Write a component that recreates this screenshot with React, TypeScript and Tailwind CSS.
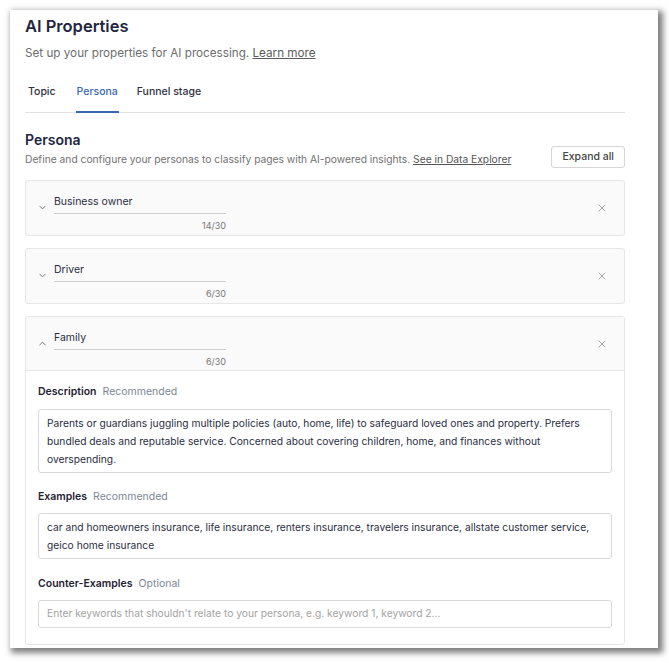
import { ChevronDown, ChevronUp, X } from "lucide-react";

const font = { fontFamily: "Inter, 'Noto Sans', sans-serif" };

function Header({ name, count, open }: { name: string; count: string; open?: boolean }) {
  return (
    <div className={`flex items-start h-[54px] pl-[11px] pr-[16px] ${open ? "border-b border-[#e6e6e6]" : ""}`}>
      {open ? (
        <ChevronUp className="w-[11px] h-[11px] text-[#555] mt-[21px]" strokeWidth={1.7} />
      ) : (
        <ChevronDown className="w-[11px] h-[11px] text-[#555] mt-[21px]" strokeWidth={1.7} />
      )}
      <div className="ml-[6px] mt-[13px] w-[172px] flex flex-col">
        <div className="text-[10.5px] text-[#2b2d42] pb-[4px] border-b border-[#cfcfcf] leading-[15px]">{name}</div>
        <div className="text-right text-[9px] text-[#777] mt-[6px] leading-[12px]">{count}</div>
      </div>
      <div className="flex-1" />
      <X className="w-[12px] h-[12px] text-[#777] mt-[21px]" strokeWidth={1.3} />
    </div>
  );
}

function Label({ title, hint }: { title: string; hint: string }) {
  return (
    <div className="flex items-baseline gap-[6px] leading-[16px]">
      <span className="text-[10.5px] font-semibold text-[#1f2233]">{title}</span>
      <span className="text-[10.5px] text-[#7d8594]">{hint}</span>
    </div>
  );
}

export default function App() {
  return (
    <div className="w-[669px] h-[663px] bg-white pt-[10px] pl-[10px]" style={font}>
      <div className="w-[648px] h-[638px] bg-white shadow-[3px_3px_6px_2px_rgba(0,0,0,0.5)] pl-[15px] pr-[33px] pt-[4px] overflow-hidden">
        <h1 className="text-[16.5px] font-semibold text-[#23263f] leading-[24px]">AI Properties</h1>
        <p className="text-[11.7px] text-[#6d6d6d] mt-[6px] leading-[18px]">
          Set up your properties for AI processing. <span className="underline text-[#5b5b5b]">Learn more</span>
        </p>
        <div className="flex mt-[23px] border-b border-[#e2e2e2] text-[10.5px] font-medium leading-[14px]">
          <div className="px-[3px] pb-[12px] text-[#2f3142]">Topic</div>
          <div className="ml-[17px] px-[1px] pb-[12px] text-[#3a68b3] border-b-2 border-[#3a68b3] -mb-px">Persona</div>
          <div className="ml-[18px] pb-[12px] text-[#2f3142]">Funnel stage</div>
        </div>
        <div className="flex items-end justify-between mt-[18px]">
          <div>
            <h2 className="text-[14px] font-semibold text-[#23263f] leading-[18px]">Persona</h2>
            <p className="text-[10.25px] text-[#717171] mt-[3px] leading-[15px]">
              Define and configure your personas to classify pages with AI-powered insights.{" "}
              <span className="underline text-[#555]">See in Data Explorer</span>
            </p>
          </div>
          <button className="h-[22px] px-[10px] border border-[#d6d6d6] rounded-[3px] text-[10.5px] font-medium text-[#444] mb-[-1px]">
            Expand all
          </button>
        </div>

        <div className="mt-[13px] flex flex-col gap-[12px]">
          <div className="border border-[#e6e6e6] rounded-[3px] bg-[#fafafa]">
            <Header name="Business owner" count="14/30" />
          </div>
          <div className="border border-[#e6e6e6] rounded-[3px] bg-[#fafafa]">
            <Header name="Driver" count="6/30" />
          </div>
          <div className="border border-[#e6e6e6] rounded-[3px] bg-white">
            <div className="bg-[#fafafa]">
              <Header name="Family" count="6/30" open />
            </div>
            <div className="px-[12px] pt-[13px] pb-[16px]">
              <Label title="Description" hint="Recommended" />
              <div className="mt-[9px] border border-[#d9d9d9] rounded-[3px] px-[8px] py-[4px] text-[10.25px] leading-[18px] text-[#2b2d42]">
                Parents or guardians juggling multiple policies (auto, home, life) to safeguard loved ones and property. Prefers bundled deals and reputable service. Concerned about covering children, home, and finances without overspending.
              </div>
              <div className="mt-[16px]">
                <Label title="Examples" hint="Recommended" />
              </div>
              <div className="mt-[8px] border border-[#d9d9d9] rounded-[3px] px-[8px] py-[4px] text-[10.25px] leading-[18px] text-[#2b2d42]">
                car and homeowners insurance, life insurance, renters insurance, travelers insurance, allstate customer service, geico home insurance
              </div>
              <div className="mt-[17px]">
                <Label title="Counter-Examples" hint="Optional" />
              </div>
              <div className="mt-[8px] border border-[#d9d9d9] rounded-[3px] px-[8px] h-[28px] flex items-center text-[10.25px] text-[#a3a3a3]">
                Enter keywords that shouldn't relate to your persona, e.g. keyword 1, keyword 2...
              </div>
            </div>
          </div>
        </div>
      </div>
    </div>
  );
}
